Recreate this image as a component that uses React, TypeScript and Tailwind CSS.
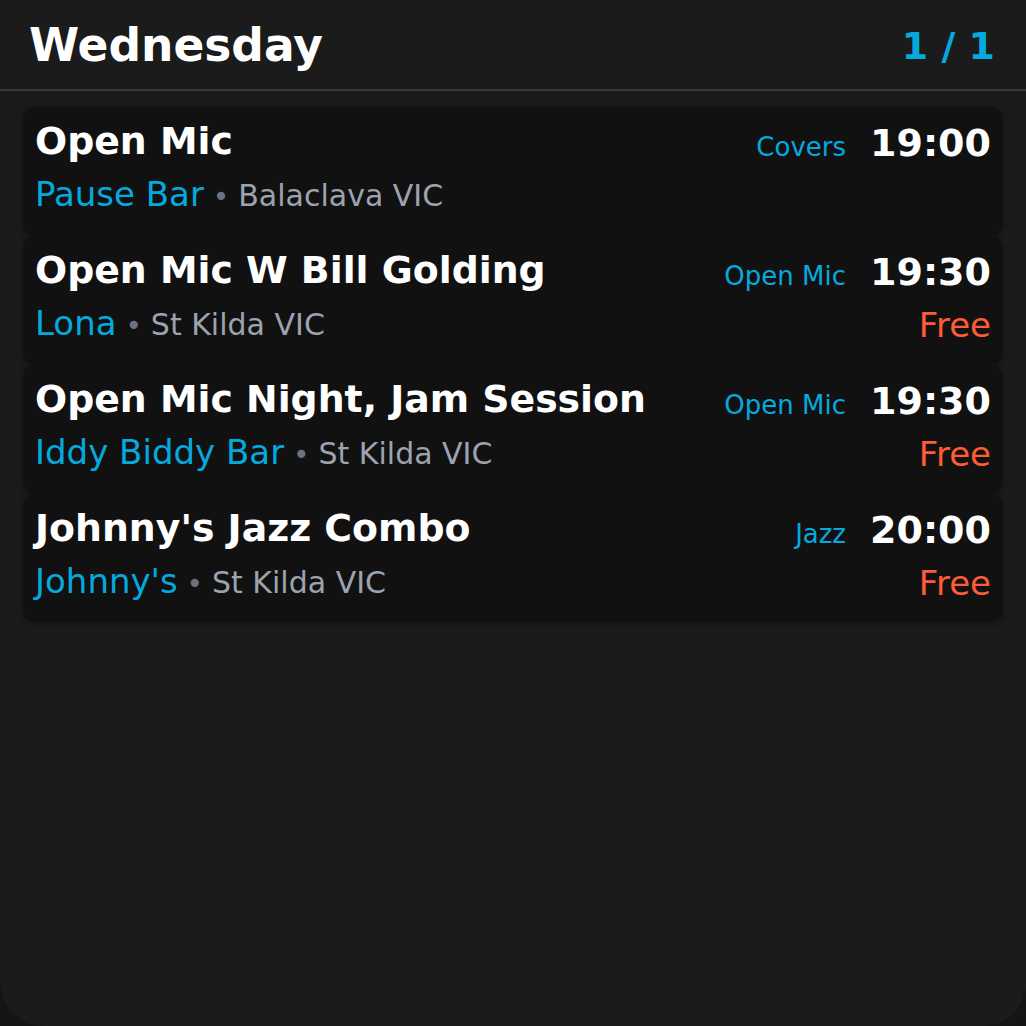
import React from "react";

type Gig = {
  title: string;
  genre: string;
  time: string;
  venue: string;
  location: string;
  price?: string;
};

const gigs: Gig[] = [
  { title: "Open Mic", genre: "Covers", time: "19:00", venue: "Pause Bar", location: "Balaclava VIC" },
  { title: "Open Mic W Bill Golding", genre: "Open Mic", time: "19:30", venue: "Lona", location: "St Kilda VIC", price: "Free" },
  { title: "Open Mic Night, Jam Session", genre: "Open Mic", time: "19:30", venue: "Iddy Biddy Bar", location: "St Kilda VIC", price: "Free" },
  { title: "Johnny's Jazz Combo", genre: "Jazz", time: "20:00", venue: "Johnny's", location: "St Kilda VIC", price: "Free" },
];

function Card({ g }: { g: Gig }) {
  return (
    <div className="flex bg-[#111111] rounded-xl h-[128px] px-3 pt-[12px] shadow-[0_2px_6px_rgba(0,0,0,0.3)]">
      <div className="flex-1 flex flex-col min-w-0">
        <div className="text-[37.8px] leading-[44px] font-bold text-white whitespace-nowrap">{g.title}</div>
        <div className="text-[34px] leading-[40px] mt-[11px] whitespace-nowrap">
          <span className="text-[#05a9de]">{g.venue}</span>
          <span className="text-[28px] text-[#6b7280]"> • </span>
          <span className="text-[30px] text-[#9ca3af]">{g.location}</span>
        </div>
      </div>
      <div className="flex flex-col items-end pt-[2px]">
        <div className="flex items-baseline leading-[44px]">
          <div className="text-[26px] text-[#05a9de]">{g.genre}</div>
          <div className="ml-6 text-[38px] font-bold text-white">{g.time}</div>
        </div>
        {g.price && <div className="text-[34px] leading-[40px] mt-[7px] text-[#ff5b37]">{g.price}</div>}
      </div>
    </div>
  );
}

export default function App() {
  return (
    <div className="w-[1026px] h-[1026px] bg-[#151515]" style={{ fontFamily: '"DejaVu Sans", sans-serif' }}>
      <div className="h-full bg-[#1b1b1b] rounded-b-[44px] overflow-hidden">
        <div className="h-[91px] flex items-center justify-between pl-[29px] pr-[31px] pt-[3px] border-b-2 border-[#353a44]">
          <div className="text-[45.5px] font-bold text-white">Wednesday</div>
          <div className="text-[38px] font-bold text-[#05a9de]">1 / 1</div>
        </div>
        <div className="px-[23px] pt-4 flex flex-col gap-px">
          {gigs.map((g, i) => (
            <Card key={i} g={g} />
          ))}
        </div>
      </div>
    </div>
  );
}
